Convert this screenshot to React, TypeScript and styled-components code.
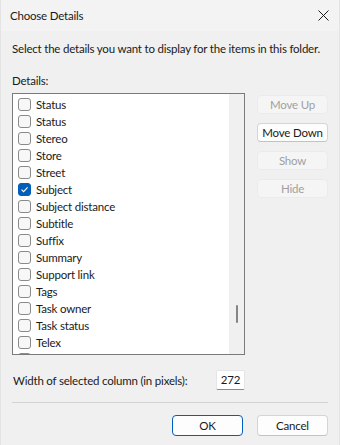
import React from "react";
import styled, { createGlobalStyle } from "styled-components";

const Global = createGlobalStyle`
  html, body { margin: 0; padding: 0; background: #f0f0f0; }
  body {
    font-family: "Lato", "Segoe UI", sans-serif;
    font-size: 11.5px;
    letter-spacing: -0.2px;
    color: #1a1a1a;
  }
`;

const Dialog = styled.div`
  width: 340px;
  height: 445px;
  box-sizing: border-box;
  background: #f0f0f0;
  display: flex;
  flex-direction: column;
  border-left: 1px solid #e4e4e4;
  border-right: 1px solid #e4e4e4;
  overflow: hidden;
`;

const TitleBar = styled.div`
  height: 31px;
  display: flex;
  align-items: center;
  justify-content: space-between;
  padding: 0 10px 0 9px;
  background: #f3f3f3;
`;

const Title = styled.span`
  color: #1a1a1a;
`;

const Body = styled.div`
  padding: 0 11px 0 11px;
  display: flex;
  flex-direction: column;
`;

const Instruction = styled.div`
  margin-top: 10px;
  line-height: 16px;
  white-space: nowrap;
`;

const Label = styled.div`
  margin-top: 16px;
  line-height: 16px;
`;

const Main = styled.div`
  margin-top: 4px;
  display: grid;
  grid-template-columns: 233px 71px;
  column-gap: 12px;
`;

const ListBox = styled.div`
  height: 262px;
  box-sizing: border-box;
  border: 1px solid #7a7a7a;
  background: #ffffff;
  display: grid;
  grid-template-columns: 1fr 15px;
  overflow: hidden;
`;

const Items = styled.div`
  padding-top: 2px;
  overflow: hidden;
`;

const Row = styled.div`
  height: 17px;
  display: flex;
  align-items: center;
  padding-left: 5px;
  gap: 5px;
`;

const Box = styled.span<{ $checked?: boolean }>`
  width: 13px;
  height: 13px;
  box-sizing: border-box;
  border-radius: 3px;
  border: 1px solid ${(p) => (p.$checked ? "#005fb8" : "#8a8a8a")};
  background: ${(p) => (p.$checked ? "#005fb8" : "#f7f7f7")};
  display: flex;
  align-items: center;
  justify-content: center;
  flex-shrink: 0;
`;

const ItemText = styled.span`
  line-height: 17px;
  white-space: nowrap;
`;

const ScrollTrack = styled.div`
  background: #f0f0f0;
  display: flex;
  justify-content: center;
  padding-top: 211px;
`;

const Thumb = styled.div`
  width: 2px;
  height: 18px;
  border-radius: 1px;
  background: #858585;
`;

const SideButtons = styled.div`
  display: flex;
  flex-direction: column;
  gap: 9px;
  padding-top: 2px;
`;

const Button = styled.button<{ $primary?: boolean; $disabled?: boolean; $tall?: boolean }>`
  font-family: inherit;
  font-size: 11.5px;
  letter-spacing: -0.2px;
  height: ${(p) => (p.$tall ? "21px" : "19px")};
  width: 71px;
  padding: 0;
  box-sizing: border-box;
  border-radius: 4px;
  background: ${(p) => (p.$disabled ? "#f5f5f5" : "#fdfdfd")};
  color: ${(p) => (p.$disabled ? "#a0a0a0" : "#1a1a1a")};
  border: 1px solid
    ${(p) => (p.$primary ? "#005fb8" : p.$disabled ? "#ebebeb" : "#d5d5d5")};
  border-bottom-color: ${(p) =>
    p.$primary ? "#005fb8" : p.$disabled ? "#ebebeb" : "#c2c2c2"};
  line-height: 17px;
`;

const WidthRow = styled.div`
  margin-top: 15px;
  display: flex;
  align-items: center;
  padding-left: 1px;
`;

const WidthLabel = styled.span`
  width: 203px;
`;

const NumberInput = styled.div`
  width: 29px;
  height: 20px;
  box-sizing: border-box;
  background: #ffffff;
  border: 1px solid #e5e5e5;
  border-bottom: 1px solid #8a8a8a;
  border-radius: 2px;
  line-height: 18px;
  text-align: center;
`;

const Separator = styled.div`
  margin-top: 12px;
  height: 1px;
  width: 316px;
  background: #d3d3d3;
`;

const Footer = styled.div`
  margin-top: 12px;
  display: flex;
  justify-content: flex-end;
  gap: 14px;
  width: 316px;
`;

const items = [
  "Status",
  "Status",
  "Stereo",
  "Store",
  "Street",
  "Subject",
  "Subject distance",
  "Subtitle",
  "Suffix",
  "Summary",
  "Support link",
  "Tags",
  "Task owner",
  "Task status",
  "Telex",
  "",
];

const Check = () => (
  <svg width="9" height="9" viewBox="0 0 9 9">
    <path d="M1.5 4.6 L3.6 6.6 L7.6 2.4" fill="none" stroke="#ffffff" strokeWidth="1.1" />
  </svg>
);

const CloseIcon = () => (
  <svg width="11" height="11" viewBox="0 0 11 11">
    <path d="M0.5 0.5 L10.5 10.5 M10.5 0.5 L0.5 10.5" stroke="#1a1a1a" strokeWidth="1" />
  </svg>
);

export default function App() {
  return (
    <>
      <Global />
      <Dialog>
        <TitleBar>
          <Title>Choose Details</Title>
          <CloseIcon />
        </TitleBar>
        <Body>
          <Instruction>Select the details you want to display for the items in this folder.</Instruction>
          <Label>Details:</Label>
          <Main>
            <ListBox>
              <Items>
                {items.map((it, i) => (
                  <Row key={i}>
                    <Box $checked={it === "Subject"}>{it === "Subject" && <Check />}</Box>
                    {it && <ItemText>{it}</ItemText>}
                  </Row>
                ))}
              </Items>
              <ScrollTrack>
                <Thumb />
              </ScrollTrack>
            </ListBox>
            <SideButtons>
              <Button $disabled>Move Up</Button>
              <Button>Move Down</Button>
              <Button $disabled>Show</Button>
              <Button $disabled>Hide</Button>
            </SideButtons>
          </Main>
          <WidthRow>
            <WidthLabel>Width of selected column (in pixels):</WidthLabel>
            <NumberInput>272</NumberInput>
          </WidthRow>
          <Separator />
          <Footer>
            <Button $primary $tall>OK</Button>
            <Button $tall>Cancel</Button>
          </Footer>
        </Body>
      </Dialog>
    </>
  );
}
